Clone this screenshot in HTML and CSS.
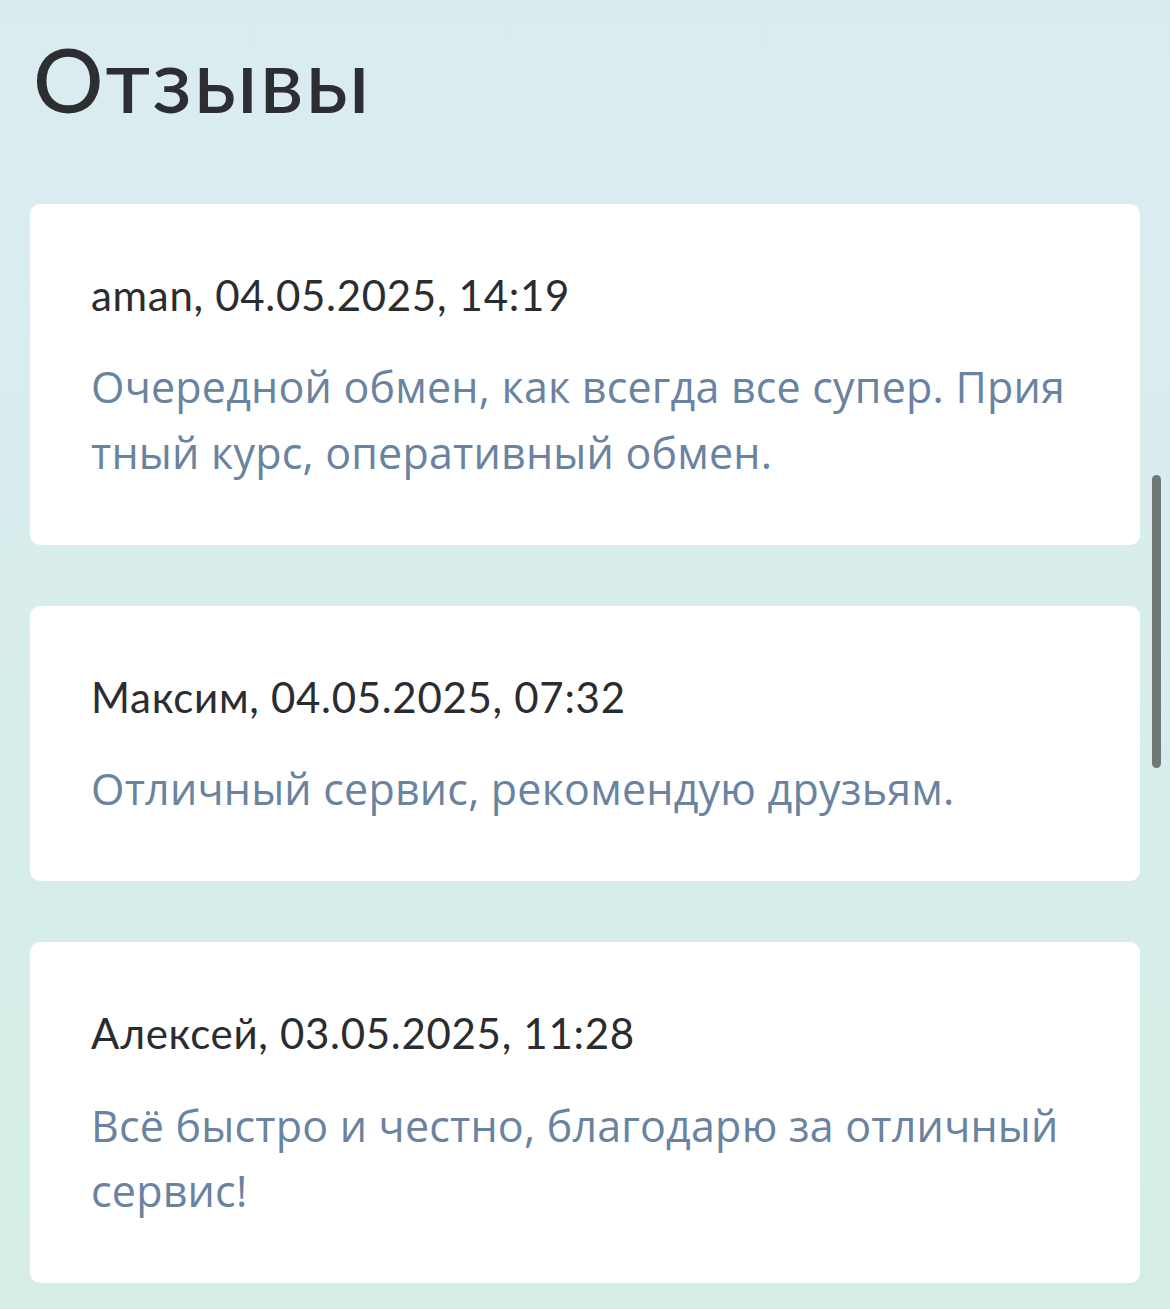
FILE: index.html
```html
<!DOCTYPE html>
<html lang="ru">
<head>
<meta charset="utf-8">
<title>Отзывы</title>
<link rel="stylesheet" href="styles.css">
</head>
<body>
<main class="page">
  <h1 class="title">Отзывы</h1>
  <section class="reviews">
    <article class="card">
      <div class="author">aman, 04.05.2025, 14:19</div>
      <p class="text">Очередной обмен, как всегда все супер. Прия<wbr>тный курс, оперативный обмен.</p>
    </article>
    <article class="card">
      <div class="author">Максим, 04.05.2025, 07:32</div>
      <p class="text">Отличный сервис, рекомендую друзьям.</p>
    </article>
    <article class="card">
      <div class="author">Алексей, 03.05.2025, 11:28</div>
      <p class="text">Всё быстро и честно, благодарю за отличный сервис!</p>
    </article>
  </section>
</main>
<div class="scrollbar"></div>
</body>
</html>
```
FILE: styles.css
```css
html, body {
  margin: 0;
  padding: 0;
}
body {
  min-height: 1309px;
  background: linear-gradient(180deg, #dbecf1 0%, #d8edec 50%, #d5ede6 100%);
  font-family: Lato, "Noto Sans", sans-serif;
  overflow: hidden;
}
.page {
  padding: 27px 30px 0;
}
.title {
  margin: 0 0 71px 3px;
  font-size: 88px;
  line-height: 1.2;
  font-weight: 500;
  color: #2c2e32;
  letter-spacing: 2px;
}
.reviews {
  display: flex;
  flex-direction: column;
  gap: 61px;
}
.card {
  background: #ffffff;
  border-radius: 10px;
  padding: 66px 61px 59.5px;
}
.author {
  font-size: 42px;
  line-height: 50px;
  color: #2a2c30;
  letter-spacing: 0.7px;
}
.text {
  margin: 34.5px 0 0;
  font-family: "Open Sans", Lato, sans-serif;
  font-size: 43px;
  line-height: 65.5px;
  color: #6983a0;
  letter-spacing: 0.2px;
  overflow-wrap: break-word;
}
.scrollbar {
  position: absolute;
  left: 1152px;
  top: 475px;
  width: 9px;
  height: 293px;
  border-radius: 5px;
  background: #6f7a76;
}
```
